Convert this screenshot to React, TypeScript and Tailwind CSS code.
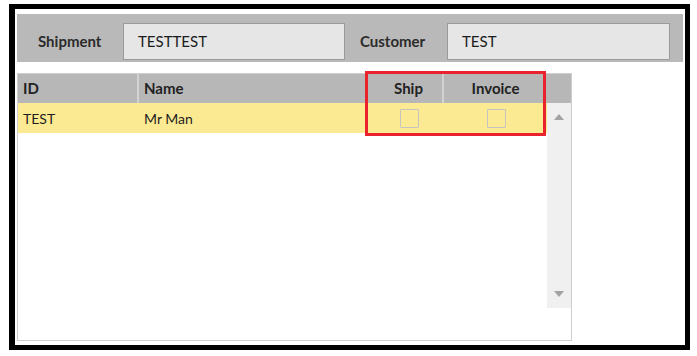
import React from "react";

type Column = { key: string; label: string; width: string; align: "left" | "center" };

const columns: Column[] = [
  { key: "id", label: "ID", width: "w-[121px]", align: "left" },
  { key: "name", label: "Name", width: "w-[230px]", align: "left" },
  { key: "ship", label: "Ship", width: "w-[75px]", align: "center" },
  { key: "invoice", label: "Invoice", width: "w-[103px]", align: "center" },
];

const rows = [{ id: "TEST", name: "Mr Man", ship: false, invoice: false }];

function Field({ label, value, labelWidth, inputWidth }: { label: string; value: string; labelWidth: string; inputWidth: string }) {
  return (
    <>
      <div className={`${labelWidth} shrink-0 font-bold text-[15px] text-[#2b2b2b]`}>{label}</div>
      <div className={`${inputWidth} h-[37px] shrink-0 flex items-center pl-[14px] bg-[#e6e6e6] border border-[#9a9a9a] text-[15px] text-[#1b1b1b]`}>
        {value}
      </div>
    </>
  );
}

function Checkbox() {
  return <div className="w-[19px] h-[19px] border border-[#c4c4c0] rounded-[1px]" />;
}

export default function App() {
  return (
    <div className="w-[697px] h-[356px] bg-white pt-[4px] pl-[9px]" style={{ fontFamily: "Lato, 'Open Sans', sans-serif" }}>
      <div className="w-[681px] h-[346px] border-[5px] border-l-[6px] border-black bg-white">
        {/* Header filter bar */}
        <div className="ml-[2px] mt-[5px] w-[666px] h-[48px] bg-[#b9b9b9] flex items-center pt-[7px]">
          <Field label="Shipment" value="TESTTEST" labelWidth="w-[106px] pl-[21px]" inputWidth="w-[222px]" />
          <Field label="Customer" value="TEST" labelWidth="w-[102px] pl-[15px]" inputWidth="w-[223px]" />
        </div>

        {/* Grid */}
        <div className="relative ml-[2px] mt-[11px] w-[555px] h-[268px] border border-[#cfcfcf] bg-white">
          <div className="flex h-[29px] bg-[#b7b7b7]">
            {columns.map((c, i) => (
              <div
                key={c.key}
                className={`${c.width} shrink-0 flex items-center font-bold text-[15px] text-[#222] ${
                  c.align === "center" ? "justify-center" : "pl-[5px]"
                } ${c.key === "ship" ? "pl-[6px]" : ""} ${i === 0 || i === 2 ? "border-r-2 border-[#d2d2d2]" : ""}`}
              >
                {c.label}
              </div>
            ))}
          </div>
          <div className="flex">
            <div className="w-[529px]">
              {rows.map((r) => (
                <div key={r.id} className="flex h-[30px] bg-[#fcea93] text-[14px] text-[#1e1e1e]">
                  <div className="w-[121px] pl-[5px] flex items-center">{r.id}</div>
                  <div className="w-[230px] pl-[5px] flex items-center">{r.name}</div>
                  <div className="w-[75px] flex items-center justify-center pl-[6px]">
                    <Checkbox />
                  </div>
                  <div className="w-[103px] flex items-center justify-center pl-[2px]">
                    <Checkbox />
                  </div>
                </div>
              ))}
            </div>
            {/* Scrollbar */}
            <div className="w-[24px] h-[205px] bg-[#f0f0f0] flex flex-col items-center justify-between pt-[11px] pb-[11px]">
              <svg width="10" height="6" viewBox="0 0 10 6">
                <polygon points="5,0 10,6 0,6" fill="#a3a3a3" />
              </svg>
              <svg width="10" height="6" viewBox="0 0 10 6">
                <polygon points="0,0 10,0 5,6" fill="#a3a3a3" />
              </svg>
            </div>
          </div>

          {/* Highlight around Ship / Invoice */}
          <div className="absolute left-[347px] top-[-3px] w-[181px] h-[65px] border-[3px] border-[#e8232b]" />
        </div>
      </div>
    </div>
  );
}
